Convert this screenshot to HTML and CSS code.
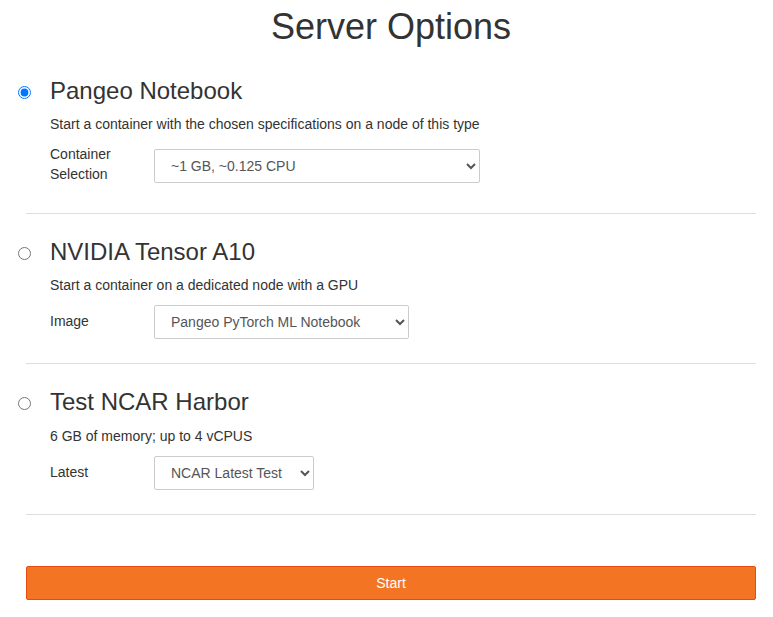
FILE: index.html
```html
<!DOCTYPE html>
<html>
<head>
<meta charset="utf-8">
<title>Server Options</title>
<link rel="stylesheet" href="styles.css">
</head>
<body>
<div class="page">
  <h1 class="title">Server Options</h1>
  <form class="form">
    <div class="option option-first">
      <div class="radio-col"><input type="radio" name="profile" checked></div>
      <div class="option-body">
        <h3 class="option-title">Pangeo Notebook</h3>
        <p class="option-desc">Start a container with the chosen specifications on a node of this type</p>
        <div class="field">
          <label class="field-label">Container Selection</label>
          <select class="select select-1"><option>~1 GB, ~0.125 CPU</option></select>
        </div>
      </div>
    </div>
    <hr class="sep">
    <div class="option">
      <div class="radio-col"><input type="radio" name="profile"></div>
      <div class="option-body">
        <h3 class="option-title">NVIDIA Tensor A10</h3>
        <p class="option-desc">Start a container on a dedicated node with a GPU</p>
        <div class="field">
          <label class="field-label field-label-single">Image</label>
          <select class="select select-2"><option>Pangeo PyTorch ML Notebook</option></select>
        </div>
      </div>
    </div>
    <hr class="sep">
    <div class="option option-third">
      <div class="radio-col"><input type="radio" name="profile"></div>
      <div class="option-body">
        <h3 class="option-title">Test NCAR Harbor</h3>
        <p class="option-desc">6 GB of memory; up to 4 vCPUS</p>
        <div class="field">
          <label class="field-label field-label-single">Latest</label>
          <select class="select select-3"><option>NCAR Latest Test</option></select>
        </div>
      </div>
    </div>
    <hr class="sep">
    <button type="button" class="start-btn">Start</button>
  </form>
</div>
</body>
</html>
```
FILE: styles.css
```css
* { box-sizing: border-box; }
html, body { margin: 0; padding: 0; background: #fff; }
body {
  font-family: "Liberation Sans", Arial, Helvetica, sans-serif;
  font-size: 14px;
  line-height: 20px;
  color: #333;
}
.page {
  padding: 0 17px 0 26px;
}
.title {
  margin: 7px 0 6px;
  font-size: 36px;
  line-height: 40px;
  font-weight: 500;
  text-align: center;
  color: #333;
}
.form { display: flex; flex-direction: column; }
.option {
  display: flex;
  padding: 25px 0 24px;
}
.option-first { padding-bottom: 29px; }
.option-third { padding-top: 25px; }
.option-third .option-desc { margin-top: 11px; }
.radio-col {
  width: 32px;
  margin-left: -8px;
  padding-top: 6px;
}
.radio-col input {
  margin: 0;
  width: 13px;
  height: 13px;
}
.option-body { flex: 1; }
.option-title {
  margin: 0;
  font-size: 24px;
  line-height: 26px;
  font-weight: 500;
  color: #333;
}
.option-desc {
  margin: 10px 0 10px;
  line-height: 20px;
}
.field {
  display: flex;
  align-items: center;
}
.field-label {
  width: 104px;
  line-height: 20px;
  padding-right: 20px;
}
.field-label-single { margin-bottom: 3px; }
.select {
  height: 34px;
  padding: 6px 8px 6px 12px;
  font-family: "Liberation Sans", Arial, sans-serif;
  font-size: 14px;
  color: #555;
  background: #fff;
  border: 1px solid #ccc;
  border-radius: 2px;
}
.select-1 { width: 326px; margin-top: 4px; }
.select-2 { width: 255px; }
.select-3 { width: 160px; }
.sep {
  margin: 0;
  border: 0;
  border-top: 1px solid #ddd;
}
.start-btn {
  margin-top: 51px;
  height: 34px;
  width: 100%;
  background: #f37524;
  border: 1px solid #e34e0e;
  border-radius: 2px;
  color: #fff;
  font-family: "Liberation Sans", Arial, sans-serif;
  font-size: 14px;
}
```
